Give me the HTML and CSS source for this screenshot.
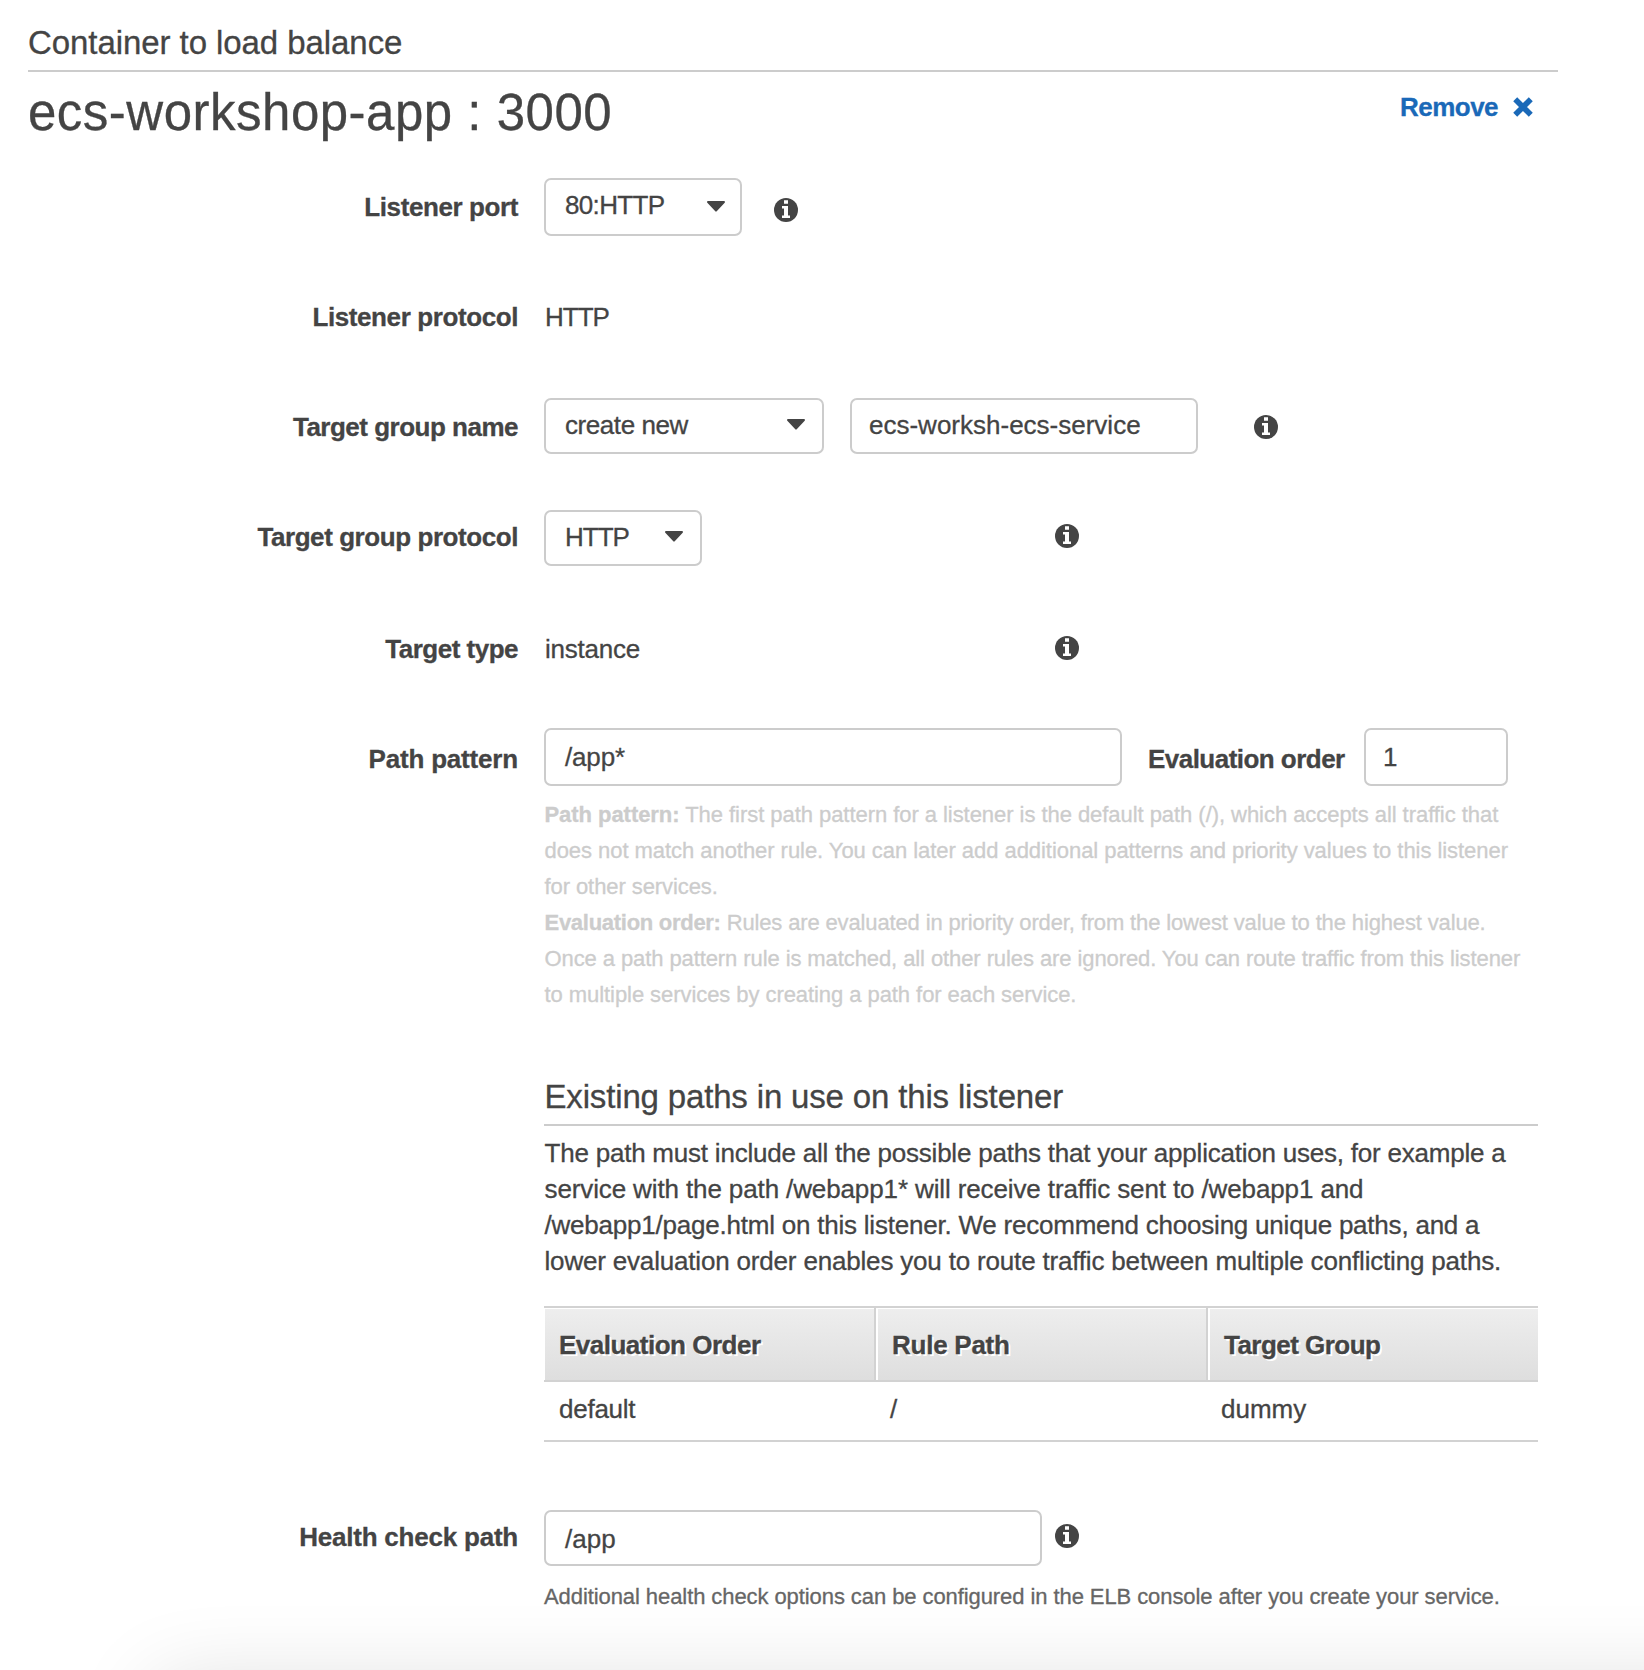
FILE: index.html
```html
<!DOCTYPE html>
<html lang="en">
<head>
<meta charset="utf-8">
<title>Container to load balance</title>
<link rel="stylesheet" href="styles.css">
</head>
<body>
<svg class="defs" aria-hidden="true">
  <symbol id="info" viewBox="0 0 24 24">
    <circle cx="12" cy="12" r="12" fill="#444"/>
    <path fill="#fff" d="M10 2.2h4v3.6h-4zM8 8h6v9.6h2V20H8v-2.4h2v-7.200H8z"/>
  </symbol>
  <symbol id="caret" viewBox="0 0 18 11">
    <path fill="#444" d="M1 0h16a1 1 0 0 1 .7 1.700L9.700 10.300a1 1 0 0 1-1.400 0L.3 1.700A1 1 0 0 1 1 0z"/>
  </symbol>
</svg>
<main class="panel">
  <h2 class="section-title">Container to load balance</h2>
  <div class="container-bar">
    <h1 class="container-name">ecs-workshop-app : 3000</h1>
    <a class="remove"><span>Remove</span>
      <svg class="remove-icon" viewBox="0 0 20 20"><path d="M4.200 4.200l11.600 11.600M15.800 4.200L4.200 15.800"/></svg>
    </a>
  </div>

  <div class="row row-port">
    <label class="label k40">Listener port</label>
    <div class="select w-port"><span class="k60">80:HTTP</span><svg class="caret"><use href="#caret"/></svg></div>
    <svg class="info info-port"><use href="#info"/></svg>
  </div>

  <div class="row row-listener">
    <label class="label k40">Listener protocol</label>
    <div class="value k80">HTTP</div>
  </div>

  <div class="row row-group">
    <label class="label k50">Target group name</label>
    <div class="select w-group"><span class="k43">create new</span><svg class="caret"><use href="#caret"/></svg></div>
    <div class="input w-name"><span>ecs-worksh-ecs-service</span></div>
    <svg class="info info-group"><use href="#info"/></svg>
  </div>

  <div class="row row-protocol">
    <label class="label k43">Target group protocol</label>
    <div class="select w-protocol"><span class="k80">HTTP</span><svg class="caret"><use href="#caret"/></svg></div>
    <svg class="info info-protocol"><use href="#info"/></svg>
  </div>

  <div class="row row-type">
    <label class="label k50">Target type</label>
    <div class="value value-type k25">instance</div>
    <svg class="info info-type"><use href="#info"/></svg>
  </div>

  <div class="row row-path">
    <label class="label k18">Path pattern</label>
    <div class="input w-path"><span class="k16">/app*</span></div>
    <label class="order-label k53">Evaluation order</label>
    <div class="input w-order"><span>1</span></div>
  </div>

  <div class="details">
    <p class="hint">
      <span class="line k05"><b>Path pattern:</b> The first path pattern for a listener is the default path (/), which accepts all traffic that</span>
      <span class="line k05">does not match another rule. You can later add additional patterns and priority values to this listener</span>
      <span class="line k08">for other services.</span>
      <span class="line k14"><b class="k28">Evaluation order:</b> Rules are evaluated in priority order, from the lowest value to the highest value.</span>
      <span class="line k10">Once a path pattern rule is matched, all other rules are ignored. You can route traffic from this listener</span>
      <span class="line k07">to multiple services by creating a path for each service.</span>
    </p>
    <h3 class="paths-title k16">Existing paths in use on this listener</h3>
    <p class="paths-text">
      <span class="line k23">The path must include all the possible paths that your application uses, for example a</span>
      <span class="line k12">service with the path /webapp1* will receive traffic sent to /webapp1 and</span>
      <span class="line k23">/webapp1/page.html on this listener. We recommend choosing unique paths, and a</span>
      <span class="line k18">lower evaluation order enables you to route traffic between multiple conflicting paths.</span>
    </p>
    <div class="table">
      <div class="thead">
        <div class="th k50">Evaluation Order</div>
        <div class="th k25">Rule Path</div>
        <div class="th k53">Target Group</div>
      </div>
      <div class="tr">
        <div class="td k25">default</div>
        <div class="td">/</div>
        <div class="td">dummy</div>
      </div>
    </div>
  </div>

  <div class="row row-health">
    <label class="label k23">Health check path</label>
    <div class="input w-health"><span>/app</span></div>
    <svg class="info info-health"><use href="#info"/></svg>
  </div>
  <p class="health-hint k08">Additional health check options can be configured in the ELB console after you create your service.</p>
</main>
<div class="edge-shadow"></div>
</body>
</html>
```
FILE: styles.css
```css
* { box-sizing: border-box; margin: 0; padding: 0; }

html, body { height: 1670px; overflow: hidden; }

body {
  position: relative;
  background: #fff;
  color: #444;
  font: 26px/36px "Liberation Sans", Arial, sans-serif;
  white-space: nowrap;
  -webkit-text-stroke: .3px currentColor;
}

.defs { display: none; }
svg { display: block; flex: none; }

/* tracking steps, in hundredths of a pixel */
.k05 { letter-spacing: -.05px; }
.k07 { letter-spacing: -.065px; }
.k08 { letter-spacing: -.08px; }
.k10 { letter-spacing: -.09px; }
.k12 { letter-spacing: -.12px; }
.k14 { letter-spacing: -.14px; }
.k16 { letter-spacing: -.16px; }
.k18 { letter-spacing: -.18px; }
.k23 { letter-spacing: -.22px; }
.k25 { letter-spacing: -.25px; }
.k28 { letter-spacing: -.28px; }
.k40 { letter-spacing: -.4px; }
.k43 { letter-spacing: -.43px; }
.k50 { letter-spacing: -.5px; }
.k53 { letter-spacing: -.53px; }
.k60 { letter-spacing: -.65px; }
.k80 { letter-spacing: -1px; }

.section-title {
  width: 1530px;
  height: 72px;
  margin-left: 28px;
  padding-top: 22px;
  border-bottom: 2px solid #ccc;
  font-size: 33px;
  line-height: 42px;
  font-weight: 400;
  letter-spacing: -.07px;
}

.container-bar {
  display: flex;
  justify-content: space-between;
  width: 1505px;
  height: 106px;
  margin-left: 28px;
}
.container-name {
  padding-top: 11px;
  font-size: 51px;
  line-height: 60px;
  font-weight: 400;
  letter-spacing: .5px;
}
.remove {
  display: flex;
  gap: 15px;
  padding-top: 17px;
  color: #1a69b8;
  font-weight: 700;
  letter-spacing: -.54px;
}
.remove-icon { width: 20px; height: 20px; margin-top: 8px; }
.remove-icon path {
  stroke: #1a69b8;
  stroke-width: 5.6;
  stroke-linecap: square;
  stroke-linejoin: round;
}

.row { display: flex; align-items: flex-start; }
.label {
  width: 518px;
  margin-right: 26px;
  text-align: right;
  font-weight: 700;
}
.row-port { height: 110px; }
.row-listener { height: 110px; padding-top: 11px; }
.row-group { height: 112px; }
.row-protocol { height: 112px; }
.row-type { height: 106px; padding-top: 9px; }
.row-path { height: 58px; }
.row-port .label, .row-group .label { padding-top: 11px; }
.row-protocol .label, .row-health .label { padding-top: 9px; }
.row-path .label, .order-label { padding-top: 13px; }

.select, .input {
  display: flex;
  justify-content: space-between;
  height: 56px;
  padding: 7px 17px 0 19px;
  border: 2px solid #ccc;
  border-radius: 7px;
  background: #fff;
}
.w-port { width: 198px; height: 58px; padding-right: 15px; }
.w-group { width: 280px; }
.w-name { width: 348px; margin-left: 26px; padding-left: 17px; }
.w-protocol { width: 158px; }
.w-path { width: 578px; height: 58px; padding-top: 9px; }
.w-order { width: 144px; height: 58px; padding: 9px 0 0 17px; }
.w-health { width: 498px; padding-top: 9px; }
.order-label { width: 242px; padding-left: 26px; font-weight: 700; }

.caret { width: 18px; height: 11px; margin-top: 12px; }
.w-port .caret { margin-top: 14px; }

.value { width: 200px; padding-left: 1px; }

.info { width: 24px; height: 24px; }
.info-port { margin: 20px 0 0 32px; }
.info-group { margin: 17px 0 0 56px; }
.info-protocol { margin: 14px 0 0 353px; }
.value-type { width: 511px; }
.info-type { margin-top: 5px; }
.info-health { margin: 14px 0 0 13px; }

.details { width: 994px; margin-left: 544px; }
.line { display: block; }
.hint {
  height: 288px;
  padding: 11px 0 0 .5px;
  font-size: 22px;
  color: #ccc;
}
.paths-title {
  height: 52px;
  padding: 2px 0 0 .5px;
  border-bottom: 2px solid #ccc;
  font-size: 33px;
  line-height: 42px;
  font-weight: 400;
}
.paths-text { padding: 9px 0 0 .5px; height: 180px; }

.table { height: 204px; }
.thead {
  display: grid;
  grid-template-columns: 332px 332px 330px;
  height: 76px;
  border-top: 2px solid #d2d2d2;
  border-bottom: 2px solid #d2d2d2;
  background: linear-gradient(#eee, #dedede);
}
.th {
  padding: 19px 0 0 14px;
  border-left: 2px solid #fff;
  border-right: 2px solid #d2d2d2;
  box-shadow: inset 0 1px #fff;
  font-weight: 700;
  text-shadow: 2px 2px 0 #fff;
}
.th:first-child { border-left-width: 1px; }
.th:last-child { border-right: 0; }
.tr {
  display: grid;
  grid-template-columns: 331px 331px 332px;
  height: 60px;
  border-bottom: 2px solid #d2d2d2;
}
.td { padding: 9px 0 0 15px; }

.row-health { height: 56px; }
.health-hint {
  margin: 13px 0 0 544px;
  font-size: 22px;
  color: #666;
}

/* soft shade rising from the bottom edge, clipped to the page */
.edge-shadow {
  position: absolute;
  inset: auto 0 0 0;
  height: 100px;
  overflow: hidden;
  pointer-events: none;
}
.edge-shadow::before {
  content: "";
  position: absolute;
  left: 156px;
  right: -100px;
  top: 114px;
  height: 200px;
  box-shadow: 0 0 86px rgba(0, 0, 0, .14);
}
```
